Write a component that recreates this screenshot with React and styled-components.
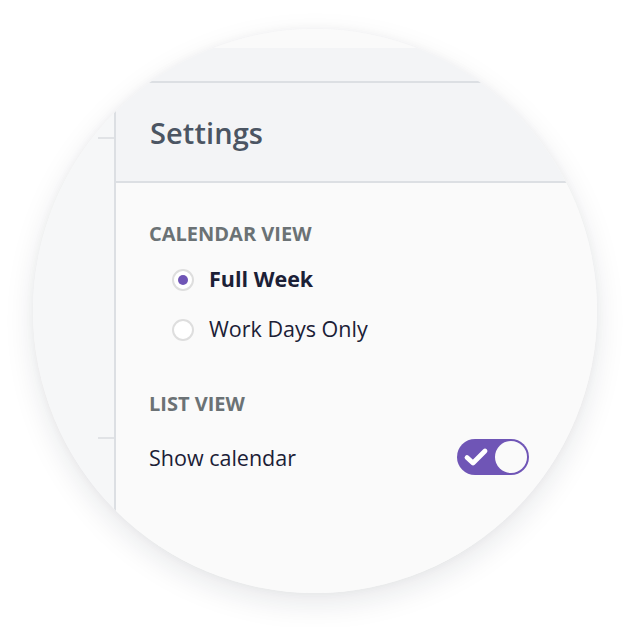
import React from "react";
import styled, { createGlobalStyle } from "styled-components";

const Global = createGlobalStyle`
  html, body { margin: 0; padding: 0; background: #ffffff; }
  body { font-family: "Open Sans", "Liberation Sans", sans-serif; }
`;

const Stage = styled.div`
  width: 627px;
  height: 627px;
  box-sizing: border-box;
  padding: 29px 0 0 33px;
  background: #ffffff;
`;

const Lens = styled.div`
  width: 564px;
  height: 564px;
  border-radius: 50%;
  overflow: hidden;
  background: #fafafa;
  box-shadow: 0 10px 30px rgba(20, 30, 50, 0.10), 0 0 10px rgba(20, 30, 50, 0.04);
  display: flex;
  flex-direction: column;
`;

const TopGap = styled.div`
  height: 19px;
  flex: none;
  background: #fafafa;
`;

const TopBar = styled.div`
  height: 33px;
  flex: none;
  background: #f3f4f6;
  border-bottom: 2px solid #dcdfe3;
`;

const Main = styled.div`
  flex: 1;
  display: flex;
  min-height: 0;
`;

const Sidebar = styled.div`
  width: 81px;
  flex: none;
  border-right: 2px solid #dcdfe3;
  display: flex;
  flex-direction: column;
  background: #f6f7f8;
`;

const SideItem = styled.div`
  height: ${(p) => p.$h}px;
  flex: none;
  margin-left: 65px;
  border-bottom: 2px solid #e1e3e6;
`;

const Panel = styled.div`
  flex: 1;
  display: flex;
  flex-direction: column;
`;

const Header = styled.div`
  height: 98px;
  flex: none;
  display: flex;
  align-items: center;
  padding-left: 34px;
  background: #f3f4f6;
  border-bottom: 2px solid #dcdfe3;
`;

const Title = styled.h1`
  margin: 0;
  font-size: 29px;
  font-weight: 600;
  color: #4b5563;
  letter-spacing: 0.1px;
`;

const Body = styled.div`
  flex: 1;
  padding: 38px 68px 0 33px;
  background: #fafafa;
`;

const Section = styled.section`
  & + & {
    margin-top: 38px;
  }
`;

const SectionLabel = styled.div`
  font-size: 20px;
  line-height: 25px;
  font-weight: 700;
  color: #6b7275;
  text-transform: uppercase;
  margin-bottom: ${(p) => p.$gap}px;
`;

const RadioRow = styled.label`
  height: 50px;
  display: flex;
  align-items: center;
  padding-left: 23px;
  gap: 15px;
  cursor: pointer;
`;

const RadioCircle = styled.span`
  width: 22px;
  height: 22px;
  box-sizing: border-box;
  border-radius: 50%;
  border: 2px solid #dedede;
  background: #ffffff;
  display: flex;
  align-items: center;
  justify-content: center;
  margin-top: 4px;
  flex: none;

  &::after {
    content: "";
    width: 10px;
    height: 10px;
    border-radius: 50%;
    background: ${(p) => (p.$checked ? "#6f55b6" : "transparent")};
  }
`;

const OptionText = styled.span`
  font-size: 21.5px;
  font-weight: ${(p) => (p.$bold ? 700 : 400)};
  color: #1b2036;
`;

const ToggleRow = styled.div`
  height: 36px;
  margin-top: 23px;
  display: flex;
  align-items: center;
  justify-content: space-between;
`;

const Toggle = styled.div`
  width: 72px;
  height: 36px;
  box-sizing: border-box;
  border-radius: 18px;
  background: #6f55b6;
  padding: 2px;
  display: flex;
  align-items: center;
  justify-content: space-between;
  padding-left: 6px;
`;

const Knob = styled.span`
  width: 32px;
  height: 32px;
  border-radius: 50%;
  background: #fafafa;
  flex: none;
`;

const options = [
  { label: "Full Week", checked: true },
  { label: "Work Days Only", checked: false },
];

export default function App() {
  return (
    <>
      <Global />
      <Stage>
        <Lens>
          <TopGap />
          <TopBar />
          <Main>
            <Sidebar>
              <SideItem $h={54} />
              <SideItem $h={298} />
            </Sidebar>
            <Panel>
              <Header>
                <Title>Settings</Title>
              </Header>
              <Body>
                <Section>
                  <SectionLabel $gap={7}>Calendar View</SectionLabel>
                  {options.map((o) => (
                    <RadioRow key={o.label}>
                      <RadioCircle $checked={o.checked} />
                      <OptionText $bold={o.checked}>{o.label}</OptionText>
                    </RadioRow>
                  ))}
                </Section>
                <Section>
                  <SectionLabel $gap={0}>List View</SectionLabel>
                  <ToggleRow>
                    <OptionText>Show calendar</OptionText>
                    <Toggle>
                      <svg width="26" height="20" viewBox="0 0 26 20">
                        <path
                          d="M4 10.5 L10 16 L22 4"
                          fill="none"
                          stroke="#ffffff"
                          strokeWidth="4.8"
                          strokeLinecap="round"
                          strokeLinejoin="round"
                        />
                      </svg>
                      <Knob />
                    </Toggle>
                  </ToggleRow>
                </Section>
              </Body>
            </Panel>
          </Main>
        </Lens>
      </Stage>
    </>
  );
}
